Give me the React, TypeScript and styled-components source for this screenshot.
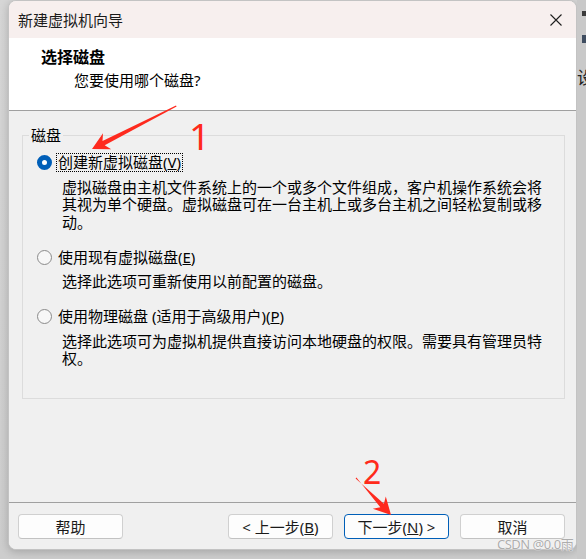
import React from "react";
import styled, { createGlobalStyle } from "styled-components";

const GlobalStyle = createGlobalStyle`
  html, body { margin: 0; padding: 0; }
  body {
    background: #d2d2d2;
    font-family: "Noto Sans", "Noto Sans CJK SC", sans-serif;
    color: #000;
  }
`;

const Desktop = styled.div`
  position: relative;
  width: 586px;
  height: 559px;
  overflow: hidden;
  display: flex;
  align-items: flex-start;
  padding-left: 8px;
  box-sizing: border-box;
  background: linear-gradient(to bottom, #d6d6d6 0%, #cdcdcd 100%);
`;

const Window = styled.div`
  flex: none;
  width: 569px;
  height: 550px;
  box-sizing: border-box;
  border: 1px solid #c3c3c3;
  border-radius: 8px;
  overflow: hidden;
  display: flex;
  flex-direction: column;
  background: #f0f0f0;
  box-shadow: 0 2px 9px rgba(0, 0, 0, 0.2);
`;

const TitleBar = styled.div`
  flex: none;
  height: 37px;
  display: flex;
  align-items: center;
  padding-left: 9px;
  background: #f7efee;
`;

const TitleText = styled.div`
  flex: 1;
  font-size: 15px;
  line-height: 20px;
  color: #1b1b1b;
`;

const CloseButton = styled.div`
  width: 41px;
  height: 37px;
  display: flex;
  align-items: center;
  justify-content: center;
`;

const Header = styled.div`
  flex: none;
  height: 73px;
  box-sizing: border-box;
  background: #ffffff;
  border-bottom: 1px solid #a0a0a0;
  padding: 9px 0 0 32px;
`;

const HeaderTitle = styled.div`
  font-size: 16px;
  font-weight: 700;
  line-height: 20px;
`;

const HeaderSub = styled.div`
  font-size: 15px;
  line-height: 20px;
  margin: 3px 0 0 33px;
`;

const Body = styled.div`
  flex: 1;
  background: #f0f0f0;
  padding: 15px 11px 0 13px;
`;

const GroupBox = styled.fieldset`
  margin: 0;
  padding: 0;
  border: 1px solid #dcdcdc;
  min-width: 0;
`;

const Legend = styled.legend`
  margin-left: 6px;
  padding: 0 2px;
  font-size: 15px;
  line-height: 18px;
`;

const GroupInner = styled.div`
  padding: 9px 20px 30px 14px;
  display: flex;
  flex-direction: column;
  gap: 16px;
`;

const OptionBlock = styled.div`
  display: flex;
  flex-direction: column;
`;

const OptionRow = styled.div`
  display: flex;
  align-items: center;
  height: 19px;
`;

const Radio = styled.span<{ $checked?: boolean }>`
  flex: none;
  width: 15px;
  height: 15px;
  box-sizing: border-box;
  border-radius: 50%;
  margin-right: 4px;
  background: ${(p) => (p.$checked ? "#ffffff" : "#f7f7f7")};
  border: ${(p) => (p.$checked ? "5px solid #005fb8" : "1px solid #8a8a8a")};
`;

const OptionLabel = styled.span<{ $focused?: boolean }>`
  font-size: 15px;
  line-height: 17px;
  padding: 0 1px;
  border: 1px dotted ${(p) => (p.$focused ? "#000" : "transparent")};
`;

const Description = styled.div`
  margin: 6.5px 0 0 25px;
  max-width: 486px;
  font-size: 15px;
  line-height: 17.8px;
`;

const Footer = styled.div`
  flex: none;
  height: 47px;
  box-sizing: border-box;
  border-top: 1px solid #a0a0a0;
  background: #f0f0f0;
  padding: 11px 11px 0 9px;
  display: flex;
  align-items: flex-start;
  gap: 11px;
`;

const Spacer = styled.div`
  flex: 1;
`;

const Button = styled.button<{ $primary?: boolean }>`
  width: 105px;
  height: 25px;
  box-sizing: border-box;
  padding: 0;
  border-radius: 4px;
  border: 1px solid ${(p) => (p.$primary ? "#005fb8" : "#d0d0d0")};
  border-bottom-color: ${(p) => (p.$primary ? "#005fb8" : "#c2c2c2")};
  background: #fdfdfd;
  font-family: "Noto Sans", "Noto Sans CJK SC", sans-serif;
  font-size: 15px;
  line-height: 20px;
  color: #1a1a1a;
  display: flex;
  align-items: center;
  justify-content: center;
`;

const SideStrip = styled.div`
  flex: 1;
  height: 559px;
  overflow: hidden;
  display: flex;
  flex-direction: column;
  align-items: flex-start;
  background: #c9c9c9;
`;

const DeskIcon = styled.span<{ $color: string; $w: number; $h: number; $mt: number; $ml: number }>`
  display: block;
  width: ${(p) => p.$w}px;
  height: ${(p) => p.$h}px;
  margin: ${(p) => p.$mt}px 0 0 ${(p) => p.$ml}px;
  background: ${(p) => p.$color};
`;

const DeskText = styled.span`
  margin: 24px 0 0 0;
  font-family: "Noto Sans CJK SC", sans-serif;
  font-size: 17px;
  line-height: 20px;
  color: #222;
  white-space: nowrap;
`;

const Annotations = styled.svg`
  position: absolute;
  left: 0;
  top: 0;
  pointer-events: none;
`;

const Watermark = styled.span`
  position: absolute;
  left: 497px;
  top: 538px;
  font-family: "Noto Sans", "Noto Sans CJK SC", sans-serif;
  font-size: 13px;
  line-height: 12px;
  letter-spacing: -0.5px;
  color: #adadad;
  text-shadow: 0 0 1px #fff, 0 0 1px #fff;
  white-space: nowrap;
`;

export default function App() {
  return (
    <>
      <GlobalStyle />
      <Desktop>
        <Window>
          <TitleBar>
            <TitleText>新建虚拟机向导</TitleText>
            <CloseButton>
              <svg width="12" height="12" viewBox="0 0 12 12">
                <path d="M0.5 0.5 L11.5 11.5 M11.5 0.5 L0.5 11.5" stroke="#1f1f1f" strokeWidth="1.1" />
              </svg>
            </CloseButton>
          </TitleBar>
          <Header>
            <HeaderTitle>选择磁盘</HeaderTitle>
            <HeaderSub>您要使用哪个磁盘?</HeaderSub>
          </Header>
          <Body>
            <GroupBox>
              <Legend>磁盘</Legend>
              <GroupInner>
                <OptionBlock>
                  <OptionRow>
                    <Radio $checked />
                    <OptionLabel $focused>
                      创建新虚拟磁盘(<u>V</u>)
                    </OptionLabel>
                  </OptionRow>
                  <Description>
                    虚拟磁盘由主机文件系统上的一个或多个文件组成，客户机操作系统会将其视为单个硬盘。虚拟磁盘可在一台主机上或多台主机之间轻松复制或移动。
                  </Description>
                </OptionBlock>
                <OptionBlock>
                  <OptionRow>
                    <Radio />
                    <OptionLabel>
                      使用现有虚拟磁盘(<u>E</u>)
                    </OptionLabel>
                  </OptionRow>
                  <Description>选择此选项可重新使用以前配置的磁盘。</Description>
                </OptionBlock>
                <OptionBlock>
                  <OptionRow>
                    <Radio />
                    <OptionLabel>
                      使用物理磁盘 (适用于高级用户)(<u>P</u>)
                    </OptionLabel>
                  </OptionRow>
                  <Description>
                    选择此选项可为虚拟机提供直接访问本地硬盘的权限。需要具有管理员特权。
                  </Description>
                </OptionBlock>
              </GroupInner>
            </GroupBox>
          </Body>
          <Footer>
            <Button>帮助</Button>
            <Spacer />
            <Button>
              &lt; 上一步(<u>B</u>)
            </Button>
            <Button $primary>
              下一步(<u>N</u>) &gt;
            </Button>
            <Button>取消</Button>
          </Footer>
        </Window>
        <SideStrip>
          <DeskIcon $color="#3b3b3b" $w={6} $h={5} $mt={11} $ml={5} />
          <DeskIcon $color="#3f4d60" $w={8} $h={8} $mt={19} $ml={5} />
          <DeskText>设</DeskText>
        </SideStrip>
        <Annotations width="586" height="559" viewBox="0 0 586 559">
          <polygon
            points="176,105.5 102.5,140.9 103,133.2 92,149 111.2,149.3 104.7,145.3 176.6,106.6"
            fill="#fe2a1e"
          />
          <text x="189" y="150" fontFamily="Noto Sans, sans-serif" fontSize="37" fill="#ff2a1a">
            1
          </text>
          <polygon
            points="355.6,478.4 383.9,503.8 385.8,496.4 391,515 372.8,508.8 380.3,507.2 356.4,477.6"
            fill="#fe2a1e"
          />
          <text x="363" y="484" fontFamily="Noto Sans, sans-serif" fontSize="32" fill="#ff2a1a">
            2
          </text>
        </Annotations>
        <Watermark>CSDN @0.0雨</Watermark>
      </Desktop>
    </>
  );
}
